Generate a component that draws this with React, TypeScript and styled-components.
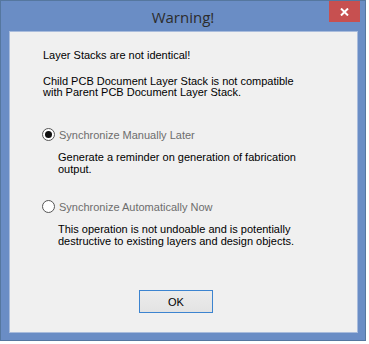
import styled, { createGlobalStyle } from "styled-components";

const GlobalStyle = createGlobalStyle`
  html, body {
    margin: 0;
    padding: 0;
    background: #ffffff;
  }
  body {
    font-family: "Liberation Sans", Arial, sans-serif;
  }
`;

const Window = styled.div`
  width: 366px;
  height: 341px;
  box-sizing: border-box;
  background: #6a8dc5;
  border: 1px solid #55779f;
  display: flex;
  flex-direction: column;
`;

const TitleBar = styled.div`
  height: 30px;
  position: relative;
  display: flex;
  align-items: center;
  justify-content: center;
`;

const Title = styled.div`
  font-family: "Open Sans", "Liberation Sans", sans-serif;
  font-size: 15px;
  color: #2c2c2c;
  margin-top: 2px;
`;

const CloseButton = styled.div`
  position: absolute;
  top: 0;
  right: 5px;
  width: 31px;
  height: 21px;
  background: #c75050;
  display: flex;
  align-items: center;
  justify-content: center;
`;

const Client = styled.div`
  flex: 1;
  margin: 0 7px 7px 8px;
  background: #f0f0f0;
  border: 1px solid #a9bcdc;
  display: flex;
  flex-direction: column;
  padding: 18px 0 0 33px;
  color: #000000;
  font-size: 11px;
`;

const Para = styled.p<{ $gap?: number }>`
  margin: 0 0 ${(p) => p.$gap ?? 0}px 0;
  line-height: 11px;
`;

const Option = styled.div<{ $gap?: number }>`
  display: flex;
  align-items: center;
  gap: 4px;
  margin: 0 0 ${(p) => p.$gap ?? 0}px -1px;
`;

const Radio = styled.span<{ $checked?: boolean }>`
  width: 11px;
  height: 11px;
  border-radius: 50%;
  border: 1px solid #555555;
  background: #ffffff;
  display: flex;
  align-items: center;
  justify-content: center;
  &::after {
    content: "";
    width: 7px;
    height: 7px;
    border-radius: 50%;
    background: #111111;
    display: ${(p) => (p.$checked ? "block" : "none")};
  }
`;

const OptionLabel = styled.span`
  color: #6d6d6d;
  line-height: 12px;
`;

const Description = styled.p<{ $gap?: number }>`
  margin: 0 0 ${(p) => p.$gap ?? 0}px 15px;
  line-height: 11.5px;
`;

const OkButton = styled.button`
  margin-top: auto;
  margin-bottom: 19px;
  margin-left: 96px;
  width: 74px;
  height: 23px;
  border: 1px solid #3c84d0;
  background: linear-gradient(#ececec, #e3e3e3);
  font-family: "Liberation Sans", Arial, sans-serif;
  font-size: 11px;
  color: #000000;
  padding: 0;
`;

export default function App() {
  return (
    <>
      <GlobalStyle />
      <Window>
        <TitleBar>
          <Title>Warning!</Title>
          <CloseButton>
            <svg width="9" height="8" viewBox="0 0 9 8">
              <path d="M1 0.5 L8 7.5 M8 0.5 L1 7.5" stroke="#ffffff" strokeWidth="2" />
            </svg>
          </CloseButton>
        </TitleBar>
        <Client>
          <Para $gap={15}>Layer Stacks are not identical!</Para>
          <Para $gap={30}>
            Child PCB Document Layer Stack is not compatible
            <br />
            with Parent PCB Document Layer Stack.
          </Para>
          <Option $gap={11}>
            <Radio $checked />
            <OptionLabel>Synchronize Manually Later</OptionLabel>
          </Option>
          <Description $gap={25}>
            Generate a reminder on generation of fabrication
            <br />
            output.
          </Description>
          <Option $gap={11}>
            <Radio />
            <OptionLabel>Synchronize Automatically Now</OptionLabel>
          </Option>
          <Description>
            This operation is not undoable and is potentially
            <br />
            destructive to existing layers and design objects.
          </Description>
          <OkButton>OK</OkButton>
        </Client>
      </Window>
    </>
  );
}
